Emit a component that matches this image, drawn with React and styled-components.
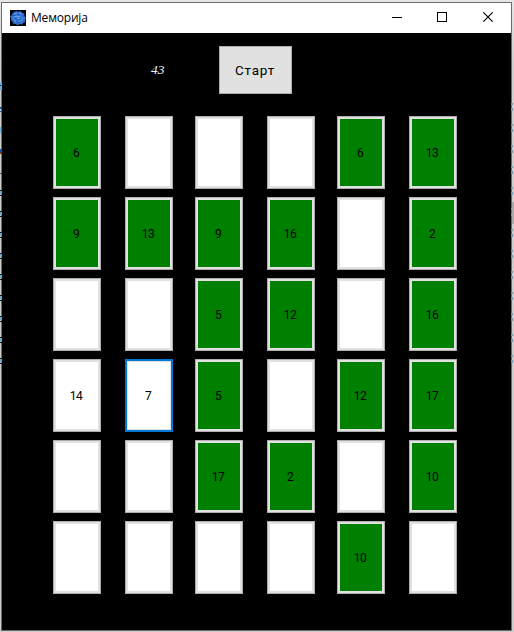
import React from "react";
import styled, { createGlobalStyle } from "styled-components";

const GlobalStyle = createGlobalStyle`
  * { box-sizing: border-box; }
  body { margin: 0; background: #d4d4d4; }
`;

const Desktop = styled.div`
  position: relative;
  width: 514px;
  height: 632px;
  padding: 2px 2px 1px 1px;
  overflow: hidden;
  background: linear-gradient(#e6e6e6, #cfcfcf 60px, #cccccc);
`;

const Window = styled.main`
  position: relative;
  width: 511px;
  height: 629px;
  border: 1px solid #6b6b6b;
  background: #000;
  font-family: Roboto, "Liberation Sans", sans-serif;
`;

const TitleBar = styled.header`
  display: flex;
  align-items: center;
  height: 30px;
  padding-left: 8px;
  background: #fff;
`;

const Title = styled.h1`
  flex: 1;
  margin: 0 0 0 5px;
  color: #000;
  font: 400 12px/16px "Open Sans", "Noto Sans", sans-serif;
  letter-spacing: -0.2px;
`;

const CaptionButtons = styled.div`
  display: flex;
`;

const CaptionButton = styled.button`
  display: grid;
  place-items: center;
  width: 46px;
  height: 30px;
  padding: 0 0 2px;
  border: 0;
  background: transparent;
`;

const Toolbar = styled.section`
  display: flex;
  align-items: center;
  height: 48px;
  margin-top: 13px;
  padding-left: 149px;
`;

const Timer = styled.output`
  width: 68px;
  color: #e8f4ff;
  font: italic 400 13.5px/16px "Liberation Serif", serif;
`;

const StartButton = styled.button`
  width: 73px;
  height: 48px;
  padding: 0 1px 0 0;
  border: 1px solid #adadad;
  background: #e1e1e1;
  color: #000;
  font: 400 13.5px/16px Roboto, sans-serif;
  letter-spacing: 0.8px;
`;

const Board = styled.section`
  display: grid;
  grid-template-columns: 72px 70px 72px 70px 72px 48px;
  grid-auto-rows: 73px;
  row-gap: 8px;
  margin: 22px 0 0 51px;
`;

const Card = styled.button`
  display: grid;
  place-items: center;
  width: 48px;
  height: 73px;
  padding: 0 2px 0 0;
  border: ${(p) => (p.$focused ? "2px solid #0078d7" : "1px solid #adadad")};
  box-shadow: inset 0 0 0 ${(p) => (p.$focused ? 1 : 2)}px #e1e1e1;
  background: ${(p) => (p.$matched ? "#008000" : "#fff")};
  color: #000;
  font: 400 12px/14px Roboto, sans-serif;
  letter-spacing: -0.6px;
`;

const Edge = styled.svg`
  position: absolute;
  top: 0;
  left: ${(p) => p.$x}px;
`;

const cards = [
  "6g", "", "", "", "6g", "13g",
  "9g", "13g", "9g", "16g", "", "2g",
  "", "", "5g", "12g", "", "16g",
  "14", "7f", "5g", "", "12g", "17g",
  "", "", "17g", "2g", "", "10g",
  "", "", "", "", "10g", "",
];

function AppIcon() {
  return (
    <svg width="16" height="16" viewBox="0 0 16 16">
      <path fill="#000" d="M0 0h16v16H0z" />
      <path fill="#2f6fd0" d="M5 1.5L7 1l1 .8L10 1l2 1.5 2 1 .6 2.5L16 8l-1 2 .2 2-2.2 1-1 1.6L9.500 14 8 15.200 5.500 14 3 13.500 2.500 11.500 .8 10 1.200 8 0 6.500 2 5l.5-2z" />
      <path fill="none" stroke="#7fb6fa" strokeWidth=".8" d="M4 4.500l3-1.500M9 3l3 1.500M3 8l2-2 3 .5 3-.5M12.500 7.500l-1 3-3 1M4 10l2 1.500M7 9l2-1 1 1" />
      <path fill="none" stroke="#17409a" strokeWidth=".6" d="M3 6l3-1M8 4.500l3 .5M5 8.500l2 2M9 10l3-1M7 13l3-.5M13 5.500v1" />
    </svg>
  );
}

function Background() {
  const rows = Array.from({ length: 9 }, (_, i) => 190 + Math.round(i * 20.95));
  const right = Array.from({ length: 13 }, (_, i) => 103 + i * 21);
  return (
    <>
      <Edge $x={0} width="2" height="632" shapeRendering="crispEdges">
        <path fill="#68b6dc" d="M0 82h2v8H0zM0 127h1v6H0z" />
        <path fill="#0756a1" d="M0 85h2v1H0zM0 107h2v2H0zM0 111h1v1H0zM0 149h2v3H0z" />
        <path fill="#7b3518" d="M0 152h2v2H0zM0 173h2v1H0z" />
        {rows.map((y) => (
          <g key={y}>
            <path fill="#16151d" d={`M0 ${y}h2v1H0zM0 ${y + 5}h2v1H0z`} />
            <path fill="#68aed0" d={`M0 ${y + 1}h2v3H0z`} />
          </g>
        ))}
      </Edge>
      <Edge $x={511} width="3" height="632" shapeRendering="crispEdges">
        {right.map((y) => (
          <path key={y} fill="#719db6" d={`M0 ${y}h2v2H0zM0 ${y + 5}h2v3H0z`} />
        ))}
        <path fill="#aaa" d="M1 202h2v22H1z" />
      </Edge>
    </>
  );
}

export default function App() {
  return (
    <Desktop>
      <GlobalStyle />
      <Window>
        <TitleBar>
          <AppIcon />
          <Title>Меморија</Title>
          <CaptionButtons>
            <CaptionButton aria-label="Minimize">
              <svg width="12" height="10" shapeRendering="crispEdges"><path d="M2 5h10v1H2z" /></svg>
            </CaptionButton>
            <CaptionButton aria-label="Maximize">
              <svg width="10" height="10" shapeRendering="crispEdges"><path d="M.5 .5h9v9h-9z" fill="none" stroke="#000" /></svg>
            </CaptionButton>
            <CaptionButton aria-label="Close">
              <svg width="10" height="10"><path d="M.3 .3l9.4 9.4M9.7 .3L.3 9.7" fill="none" stroke="#000" strokeWidth="1.1" /></svg>
            </CaptionButton>
          </CaptionButtons>
        </TitleBar>
        <Toolbar>
          <Timer>43</Timer>
          <StartButton>Старт</StartButton>
        </Toolbar>
        <Board>
          {cards.map((c, i) => (
            <Card key={i} $matched={c.endsWith("g")} $focused={c.endsWith("f")}>
              {c.replace(/\D/g, "")}
            </Card>
          ))}
        </Board>
      </Window>
      <Background />
    </Desktop>
  );
}
